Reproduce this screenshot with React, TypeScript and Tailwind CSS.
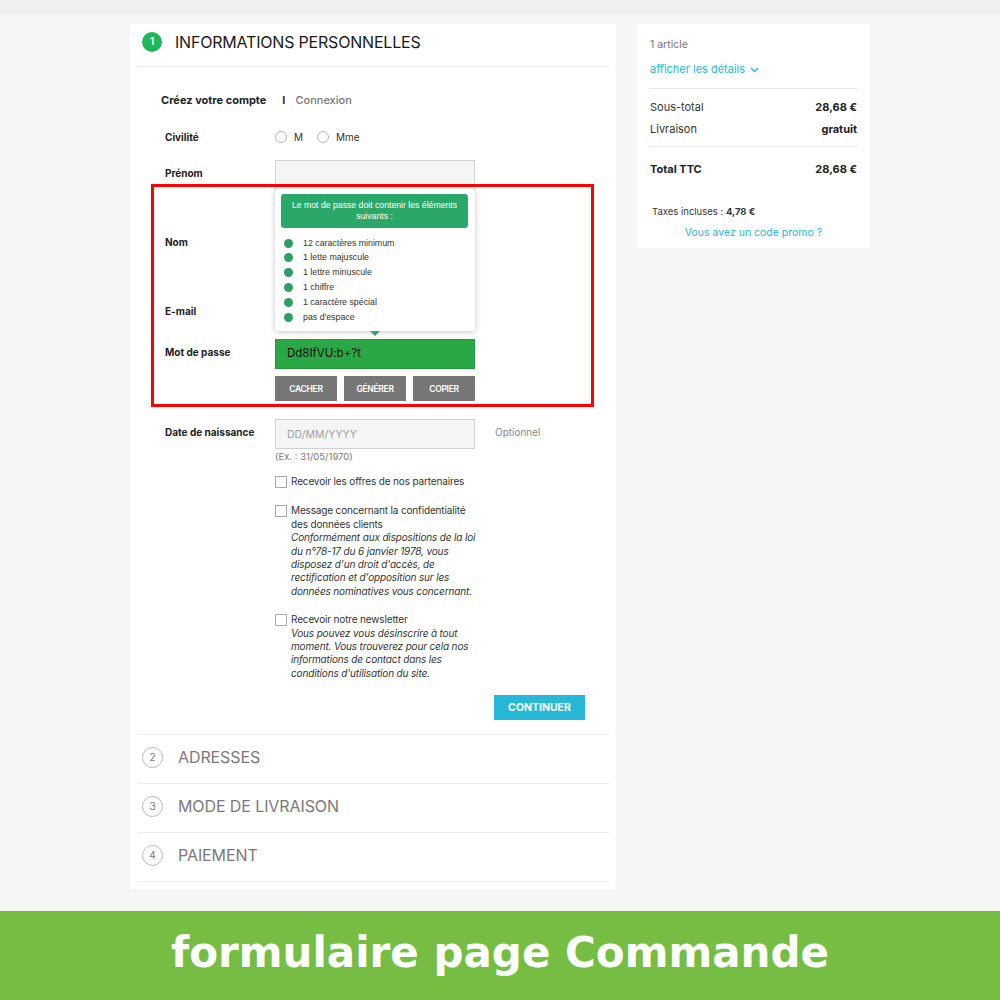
import React from "react";

function Radio({ label }: { label: string }) {
  return (
    <div className="flex items-center">
      <span className="w-[12px] h-[12px] rounded-full border border-[#b5b5b5] bg-white" />
      <span className="ml-[7px] text-[10px] text-[#333]">{label}</span>
    </div>
  );
}

function Checkbox() {
  return <span className="mt-[1px] w-[12px] h-[12px] shrink-0 border border-[#a8a8a8] bg-white" />;
}

function Tooltip() {
  const items = [
    "12 caractères minimum",
    "1 lette majuscule",
    "1 lettre minuscule",
    "1 chiffre",
    "1 caractère spécial",
    "pas d'espace",
  ];
  return (
    <div className="absolute left-0 bottom-full mb-[8px] w-[200px] bg-white rounded-[3px] shadow-[0_1px_6px_rgba(0,0,0,0.22)] font-['Liberation_Sans',Arial,sans-serif] z-10">
      <div className="pt-[5px] pl-[6px] pr-[7px]">
        <div className="h-[34px] rounded-[3px] bg-[#2ca76a] text-white text-[8.7px] leading-[11px] text-center flex items-center justify-center px-[6px]">
          Le mot de passe doit contenir les éléments suivants :
        </div>
      </div>
      <div className="pt-[8px] pb-[6px] pl-[9px]">
        {items.map((t) => (
          <div key={t} className="flex items-center h-[14.9px]">
            <span className="w-[9px] h-[9px] rounded-full bg-[#2f9e62]" />
            <span className="ml-[10px] text-[8.8px] text-[#333]">{t}</span>
          </div>
        ))}
      </div>
      <div className="absolute left-1/2 -translate-x-1/2 top-full w-0 h-0 border-l-[5px] border-r-[5px] border-t-[5px] border-l-transparent border-r-transparent border-t-[#2ca76a]" />
    </div>
  );
}

function Label({ children }: { children: React.ReactNode }) {
  return (
    <div className="w-[110px] shrink-0 pt-[7px] text-[10px] leading-[13px] font-bold text-[#222]">
      {children}
    </div>
  );
}

function Input({ placeholder }: { placeholder?: string }) {
  return (
    <div className="w-[200px] h-[30px] bg-[#f5f5f5] border border-[#d0d0d0] flex items-center pl-[11px] pt-[1px] text-[10.5px] text-[#a0a0a0]">
      {placeholder}
    </div>
  );
}

function Step({ n, title }: { n: number; title: string }) {
  return (
    <div className="mx-[7px] h-[49px] border-b border-[#ececec] flex items-center pb-[4px]">
      <span className="ml-[5px] w-[21px] h-[21px] rounded-full border border-[#b8b8b8] flex items-center justify-center text-[10px] text-[#777]">
        {n}
      </span>
      <span className="ml-[15px] text-[16px] text-[#7a7a7a] tracking-[-0.1px]">{title}</span>
    </div>
  );
}

function LeftCard() {
  return (
    <div className="w-[486px] h-[865px] bg-white shrink-0">
      <div className="h-[42px] flex items-center pb-[7px] pl-[12px]">
        <span className="w-[20px] h-[20px] rounded-full bg-[#21b65b] flex items-center justify-center text-white text-[10px] font-semibold">
          1
        </span>
        <span className="ml-[13px] text-[16px] text-[#1a1a1a] tracking-[-0.2px]">INFORMATIONS PERSONNELLES</span>
      </div>
      <div className="mx-[7px] h-px bg-[#e6e6e6]" />
      <div className="mt-[25px] pl-[31px] h-[16px] flex items-center text-[11px]">
        <span className="font-bold text-[#222]">Créez votre compte</span>
        <span className="ml-[16px] font-bold text-[#333]">I</span>
        <span className="ml-[10px] text-[#777] font-medium">Connexion</span>
      </div>

      <div className="pl-[35px]">
        {/* Civilité */}
        <div className="mt-[19px] h-[20px] flex items-center">
          <div className="w-[110px] text-[10px] font-bold text-[#222]">Civilité</div>
          <Radio label="M" />
          <div className="ml-[14px]">
            <Radio label="Mme" />
          </div>
        </div>
        {/* Prénom */}
        <div className="mt-[13px] flex">
          <Label>Prénom</Label>
          <Input />
        </div>
        {/* Nom */}
        <div className="mt-[39px] flex">
          <Label>Nom</Label>
          <Input />
        </div>
        {/* E-mail */}
        <div className="mt-[39px] flex">
          <Label>E-mail</Label>
          <Input />
        </div>
        {/* Mot de passe */}
        <div className="mt-[11px] flex">
          <Label>Mot de passe</Label>
          <div>
            <div className="relative">
              <Tooltip />
              <div className="w-[200px] h-[30px] bg-[#2aa846] border border-[#239a3d] flex items-center pl-[11px] text-[11.5px] text-[#111]">
                Dd8IfVU:b+?t
              </div>
            </div>
            <div className="mt-[7px] flex gap-[7px]">
              {["CACHER", "GÉNÉRER", "COPIER"].map((b) => (
                <div
                  key={b}
                  className="w-[62px] h-[25px] pt-[1px] bg-[#777777] text-white text-[8.5px] font-semibold flex items-center justify-center tracking-[-0.3px]"
                >
                  {b}
                </div>
              ))}
            </div>
          </div>
        </div>
        {/* Date */}
        <div className="mt-[18px] flex">
          <Label>Date de naissance</Label>
          <div>
            <Input placeholder="DD/MM/YYYY" />
            <div className="h-[15px] leading-[16px] text-[9.5px] text-[#777]">(Ex. : 31/05/1970)</div>
          </div>
          <div className="ml-[20px] pt-[6px] text-[10px] text-[#888]">Optionnel</div>
        </div>
        {/* Checkboxes */}
        <div className="ml-[110px] text-[10px] leading-[13.4px] text-[#333] tracking-[-0.15px]">
          <div className="mt-[11px] flex gap-[4px]">
            <Checkbox />
            <div>Recevoir les offres de nos partenaires</div>
          </div>
          <div className="mt-[16px] flex gap-[4px]">
            <Checkbox />
            <div className="w-[190px]">
              <div>Message concernant la confidentialité des données clients</div>
              <div className="italic">
                Conformément aux dispositions de la loi du n°78-17 du 6 janvier 1978, vous disposez d'un droit d'accès, de rectification et d'opposition sur les données nominatives vous concernant.
              </div>
            </div>
          </div>
          <div className="mt-[15px] flex gap-[4px]">
            <Checkbox />
            <div className="w-[190px]">
              <div>Recevoir notre newsletter</div>
              <div className="italic">
                Vous pouvez vous désinscrire à tout moment. Vous trouverez pour cela nos informations de contact dans les conditions d'utilisation du site.
              </div>
            </div>
          </div>
        </div>
      </div>
      <div className="mt-[15px] flex justify-end pr-[31px]">
        <div className="w-[91px] h-[25px] bg-[#25b9d7] text-white text-[10.5px] font-bold flex items-center justify-center">
          CONTINUER
        </div>
      </div>
      <div className="mt-[14px] mx-[7px] h-px bg-[#ececec]" />
      <Step n={2} title="ADRESSES" />
      <Step n={3} title="MODE DE LIVRAISON" />
      <Step n={4} title="PAIEMENT" />
    </div>
  );
}

function RightCard() {
  return (
    <div className="w-[233px] h-[224px] bg-white px-[13px] shrink-0">
      <div className="pt-[14px] text-[10.5px] leading-[14px] text-[#777]">1 article</div>
      <div className="mt-[10px] flex items-center text-[11px] leading-[14px] text-[#25b9d7]">
        afficher les détails
        <svg className="ml-[5px] mt-[1px]" width="9" height="6" viewBox="0 0 9 6" fill="none">
          <path d="M1 1l3.5 3.5L8 1" stroke="#25b9d7" strokeWidth="1.5" />
        </svg>
      </div>
      <div className="mt-[12px] h-px bg-[#e6e6e6]" />
      <div className="mt-[11px] flex justify-between text-[11px] leading-[14px] text-[#333]">
        <span>Sous-total</span>
        <span className="font-bold text-[#222]">28,68 €</span>
      </div>
      <div className="mt-[8px] flex justify-between text-[11px] leading-[14px] text-[#333]">
        <span>Livraison</span>
        <span className="font-bold text-[#222]">gratuit</span>
      </div>
      <div className="mt-[10px] h-px bg-[#e6e6e6]" />
      <div className="mt-[15px] flex justify-between text-[11px] leading-[14px] font-bold text-[#222]">
        <span>Total TTC</span>
        <span>28,68 €</span>
      </div>
      <div className="mt-[29px] pl-[2px] text-[9.5px] leading-[13px] text-[#333]">
        Taxes incluses : <span className="font-bold">4,78 €</span>
      </div>
      <div className="mt-[8px] text-center text-[10.5px] leading-[14px] text-[#25b9d7]">Vous avez un code promo ?</div>
    </div>
  );
}

export default function App() {
  return (
    <div className="relative w-[1000px] h-[1000px] bg-[#f6f6f6] font-['Inter',sans-serif] overflow-hidden">
      <div className="h-[14px] bg-[#eff0f2]" />
      <div className="h-[897px] pt-[10px] pl-[130px] flex items-start gap-[21px]">
        <LeftCard />
        <RightCard />
      </div>
      <div className="h-[89px] bg-[#76bd43] flex items-center justify-center pb-[6px]">
        <span className="font-['DejaVu_Sans',sans-serif] font-bold text-[42px] text-white">formulaire page Commande</span>
      </div>
      <div className="absolute left-[151px] top-[184px] w-[443px] h-[223px] border-[3px] border-[#ff0000] pointer-events-none" />
    </div>
  );
}
